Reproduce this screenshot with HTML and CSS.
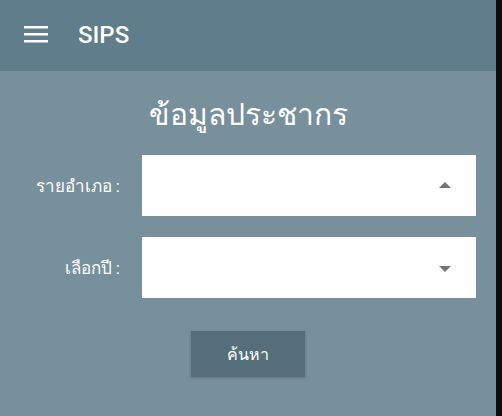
FILE: index.html
```html
<!DOCTYPE html>
<html lang="th">
<head>
<meta charset="utf-8">
<link rel="stylesheet" href="styles.css">
</head>
<body>
<div class="app">
  <header class="topbar">
    <svg class="menu" width="24" height="17" viewBox="0 0 24 17"><rect x="0" y="0" width="24" height="2.5" fill="#fff"/><rect x="0" y="7" width="24" height="2.5" fill="#fff"/><rect x="0" y="14" width="24" height="2.5" fill="#fff"/></svg>
    <span class="brand">SIPS</span>
  </header>
  <main class="content">
    <h1 class="title">ข้อมูลประชากร</h1>
    <div class="form">
      <label class="label">รายอำเภอ :</label>
      <div class="select"><span class="arrow up"></span></div>
      <label class="label">เลือกปี :</label>
      <div class="select"><span class="arrow down"></span></div>
    </div>
    <div class="actions"><button class="btn">ค้นหา</button></div>
  </main>
</div>
<div class="edge"></div>
</body>
</html>
```
FILE: styles.css
```css
html, body { margin: 0; padding: 0; height: 100%; }
body {
  display: flex;
  background: #0c0c0c;
  font-family: Roboto, "Noto Sans", "Liberation Sans", sans-serif;
}
.app { width: 496px; height: 416px; background: #78909c; display: flex; flex-direction: column; }
.edge { flex: 1; background: #0c0c0c; }
.topbar {
  height: 71px;
  background: #607d8b;
  display: flex;
  align-items: center;
  padding-left: 24px;
  box-sizing: border-box;
}
.menu { display: block; margin-top: -3px; }
.brand {
  color: #fff;
  font-size: 24px;
  font-weight: 500;
  margin-left: 30px;
  margin-top: -1px;
}
.content { display: flex; flex-direction: column; }
.title {
  margin: 24px 0 0;
  text-align: center;
  color: #fff;
  font-weight: 400;
  font-size: 30px;
  line-height: 40px;
  height: 60px;
}
.form {
  display: grid;
  grid-template-columns: 142px 334px;
  grid-auto-rows: 61px;
  row-gap: 21px;
}
.label {
  color: #fff;
  font-size: 17px;
  text-align: right;
  padding-right: 22px;
  align-self: center;
}
.select { background: #fff; position: relative; }
.arrow {
  position: absolute;
  right: 25px;
  top: 50%;
  width: 0; height: 0;
  border-left: 6px solid transparent;
  border-right: 6px solid transparent;
}
.arrow.up { border-bottom: 6px solid #757575; margin-top: -4px; }
.arrow.down { border-top: 6px solid #757575; margin-top: -2px; }
.actions { display: flex; justify-content: center; padding-top: 33px; }
.btn {
  width: 114px;
  height: 46px;
  background: #546e7a;
  color: #fff;
  border: none;
  font-family: inherit;
  font-size: 16px;
  box-shadow: 0 1px 3px rgba(0,0,0,0.2);
}
```
